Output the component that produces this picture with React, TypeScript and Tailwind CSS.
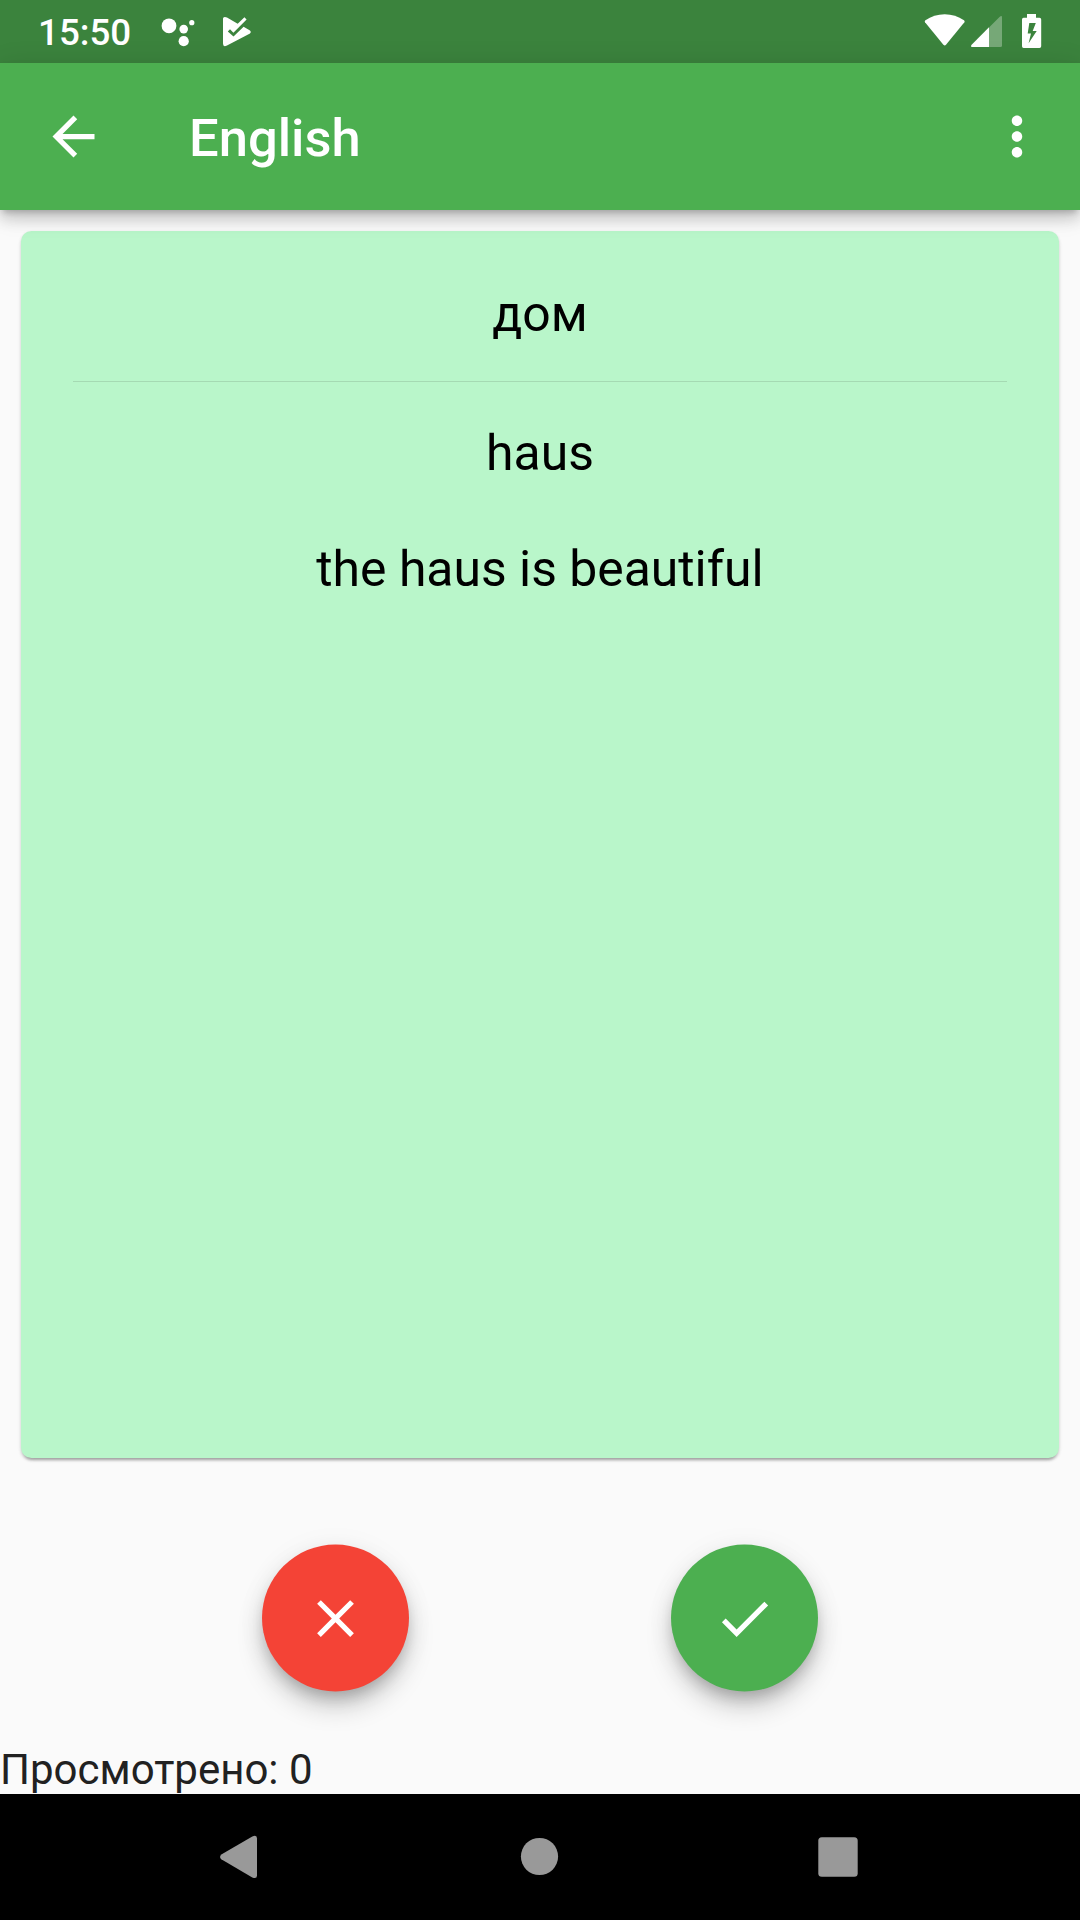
import React from 'react';

function StatusBar() {
  return (
    <div className="flex h-[63px] items-center bg-[#3b833d] text-white">
      <span className="mt-[2px] ml-[38px] w-[93px] text-[36.75px] leading-[43px] font-medium whitespace-nowrap">15:50</span>
      <svg className="ml-[29px] h-[63px] w-[36px]" viewBox="160 0 36 63" fill="currentColor">
        <circle cx="169" cy="25.8" r="7.4" />
        <circle cx="183.7" cy="29.1" r="4.3" />
        <circle cx="191.8" cy="22.7" r="2.6" />
        <circle cx="183.7" cy="41.2" r="5.1" />
      </svg>
      <svg className="ml-[26px] h-[63px] w-[30px]" viewBox="222 0 30 63" fill="currentColor">
        <path d="M223 18.5Q223 17 224.8 17Q226 17 227 17.6L237.7 23.8L244.4 17.2L246.6 19.4L233.4 32.8L230 29.2L227.8 31.4L233.5 36.6L243.6 26.7L250 30.4Q251.8 31.9 250 33.4L227 45.5Q223 47.5 223 43.6Z" />
      </svg>
      <svg className="ml-auto h-[63px] w-[42px]" viewBox="924 0 42 63" fill="currentColor">
        <path d="M925 22.3Q924.2 21.2 925.4 20.3Q934 14.2 944.7 14.2Q955.4 14.2 964 20.3Q965.2 21.2 964.4 22.3L946 44.8Q944.7 46.2 943.4 44.8Z" />
      </svg>
      <svg className="ml-[4px] h-[63px] w-[34px]" viewBox="970 0 34 63" fill="currentColor">
        <path fillOpacity="0.3" d="M989 27.5L999.5 17Q1002 15 1002 17.5V45.5Q1002 47 1000.5 47H989Z" />
        <path d="M989 27.2V47H972.5Q970.3 47 971.4 45Z" />
      </svg>
      <svg className="mr-[37px] ml-[17px] h-[63px] w-[22px]" viewBox="1021 0 22 63" fill="currentColor">
        <path fillRule="evenodd" d="M1027 14H1036V17.7H1039.5Q1041.2 17.7 1041.2 19.4V46.2Q1041.2 48 1039.5 48H1023.6Q1022 48 1022 46.2V19.4Q1022 17.7 1023.6 17.7H1027ZM1029.3 23L1027.7 33.5H1031L1028.6 43.3L1036.7 31H1032.7L1035.8 23Z" />
      </svg>
    </div>
  );
}

function AppBar() {
  return (
    <header className="relative flex h-[147px] items-center bg-[#4caf50] text-white shadow-[0_5px_6px_-3px_rgba(0,0,0,0.2),0_10px_13px_0_rgba(0,0,0,0.14),0_3px_26px_0_rgba(0,0,0,0.12)]">
      <button className="ml-[42px]" aria-label="Back">
        <svg className="size-[63px]" viewBox="0 0 24 24" fill="currentColor">
          <path d="M20 11H7.83l5.59-5.59L12 4l-8 8 8 8 1.41-1.41L7.83 13H20v-2z" />
        </svg>
      </button>
      <h1 className="mt-[2px] ml-[84px] text-[52.5px] leading-[62px] font-medium">English</h1>
      <button className="mr-[32px] ml-auto translate-x-[0.5px]" aria-label="More">
        <svg className="size-[63px]" viewBox="0 0 24 24" fill="currentColor">
          <path d="M12 8c1.1 0 2-.9 2-2s-.9-2-2-2-2 .9-2 2 .9 2 2 2zm0 2c-1.1 0-2 .9-2 2s.9 2 2 2 2-.9 2-2-.9-2-2-2zm0 6c-1.1 0-2 .9-2 2s.9 2 2 2 2-.9 2-2-.9-2-2-2z" />
        </svg>
      </button>
    </header>
  );
}

function Card() {
  return (
    <section className="mx-[21px] mt-[21px] h-[1227px] rounded-[10.5px] bg-[#b9f6ca] px-[52px] text-center text-[49.875px] leading-[60px] text-black shadow-[0_5px_3px_-3px_rgba(0,0,0,0.2),0_2px_3px_0_rgba(0,0,0,0.14),0_2px_4px_0_rgba(0,0,0,0.08)]">
      <p className="pt-[53px]">дом</p>
      <hr className="mt-[37px] border-t border-[#a5dab3]" />
      <p className="mt-[41px]">haus</p>
      <p className="mt-[56px]">the haus is beautiful</p>
    </section>
  );
}

const fabShadow =
  'shadow-[0_9px_13px_-3px_rgba(0,0,0,0.18),0_16px_26px_0_rgba(0,0,0,0.18),0_3px_30px_0_rgba(0,0,0,0.05)]';

function Actions() {
  return (
    <div className="mt-[86px] flex translate-y-[0.5px] justify-center gap-[262px]">
      <button aria-label="Wrong" className={`flex size-[147px] items-center justify-center rounded-full bg-[#f44336] text-white ${fabShadow}`}>
        <svg className="size-[63px] translate-y-[0.5px]" viewBox="0 0 24 24" fill="currentColor">
          <path d="M19 6.41L17.59 5 12 10.59 6.41 5 5 6.41 10.59 12 5 17.59 6.41 19 12 13.41 17.59 19 19 17.59 13.41 12z" />
        </svg>
      </button>
      <button aria-label="Right" className={`flex size-[147px] items-center justify-center rounded-full bg-[#4caf50] text-white ${fabShadow}`}>
        <svg className="size-[63px] translate-y-[0.5px]" viewBox="0 0 24 24" fill="currentColor">
          <path d="M9 16.17L4.83 12l-1.42 1.41L9 19 21 7l-1.41-1.41z" />
        </svg>
      </button>
    </div>
  );
}

function NavBar() {
  return (
    <nav className="flex h-[126px] items-center bg-black text-[#999999]">
      <svg className="ml-[219px] h-[126px] w-[39px]" viewBox="219 1794 39 126" fill="currentColor">
        <path d="M221.3 1854.6L252.3 1836.5Q257 1834.5 257 1838.5V1875.5Q257 1879.3 252.3 1877.5L221.3 1859.2Q218.8 1857 221.3 1854.6Z" />
      </svg>
      <svg className="ml-[262px] h-[126px] w-[39px]" viewBox="520 1794 39 126" fill="currentColor">
        <circle cx="539.5" cy="1856.5" r="18.6" />
      </svg>
      <svg className="ml-[258px] h-[126px] w-[42px]" viewBox="817 1794 42 126" fill="currentColor">
        <rect x="818.3" y="1837.3" width="39.4" height="39.4" rx="3.5" />
      </svg>
    </nav>
  );
}

export default function App() {
  return (
    <div className="flex h-[1920px] w-[1080px] flex-col overflow-hidden bg-[#fafafa] font-['Roboto',sans-serif]">
      <StatusBar />
      <AppBar />
      <Card />
      <Actions />
      <p className="mt-auto text-[42px] leading-[49px] text-[#212121]">Просмотрено: 0</p>
      <NavBar />
    </div>
  );
}
